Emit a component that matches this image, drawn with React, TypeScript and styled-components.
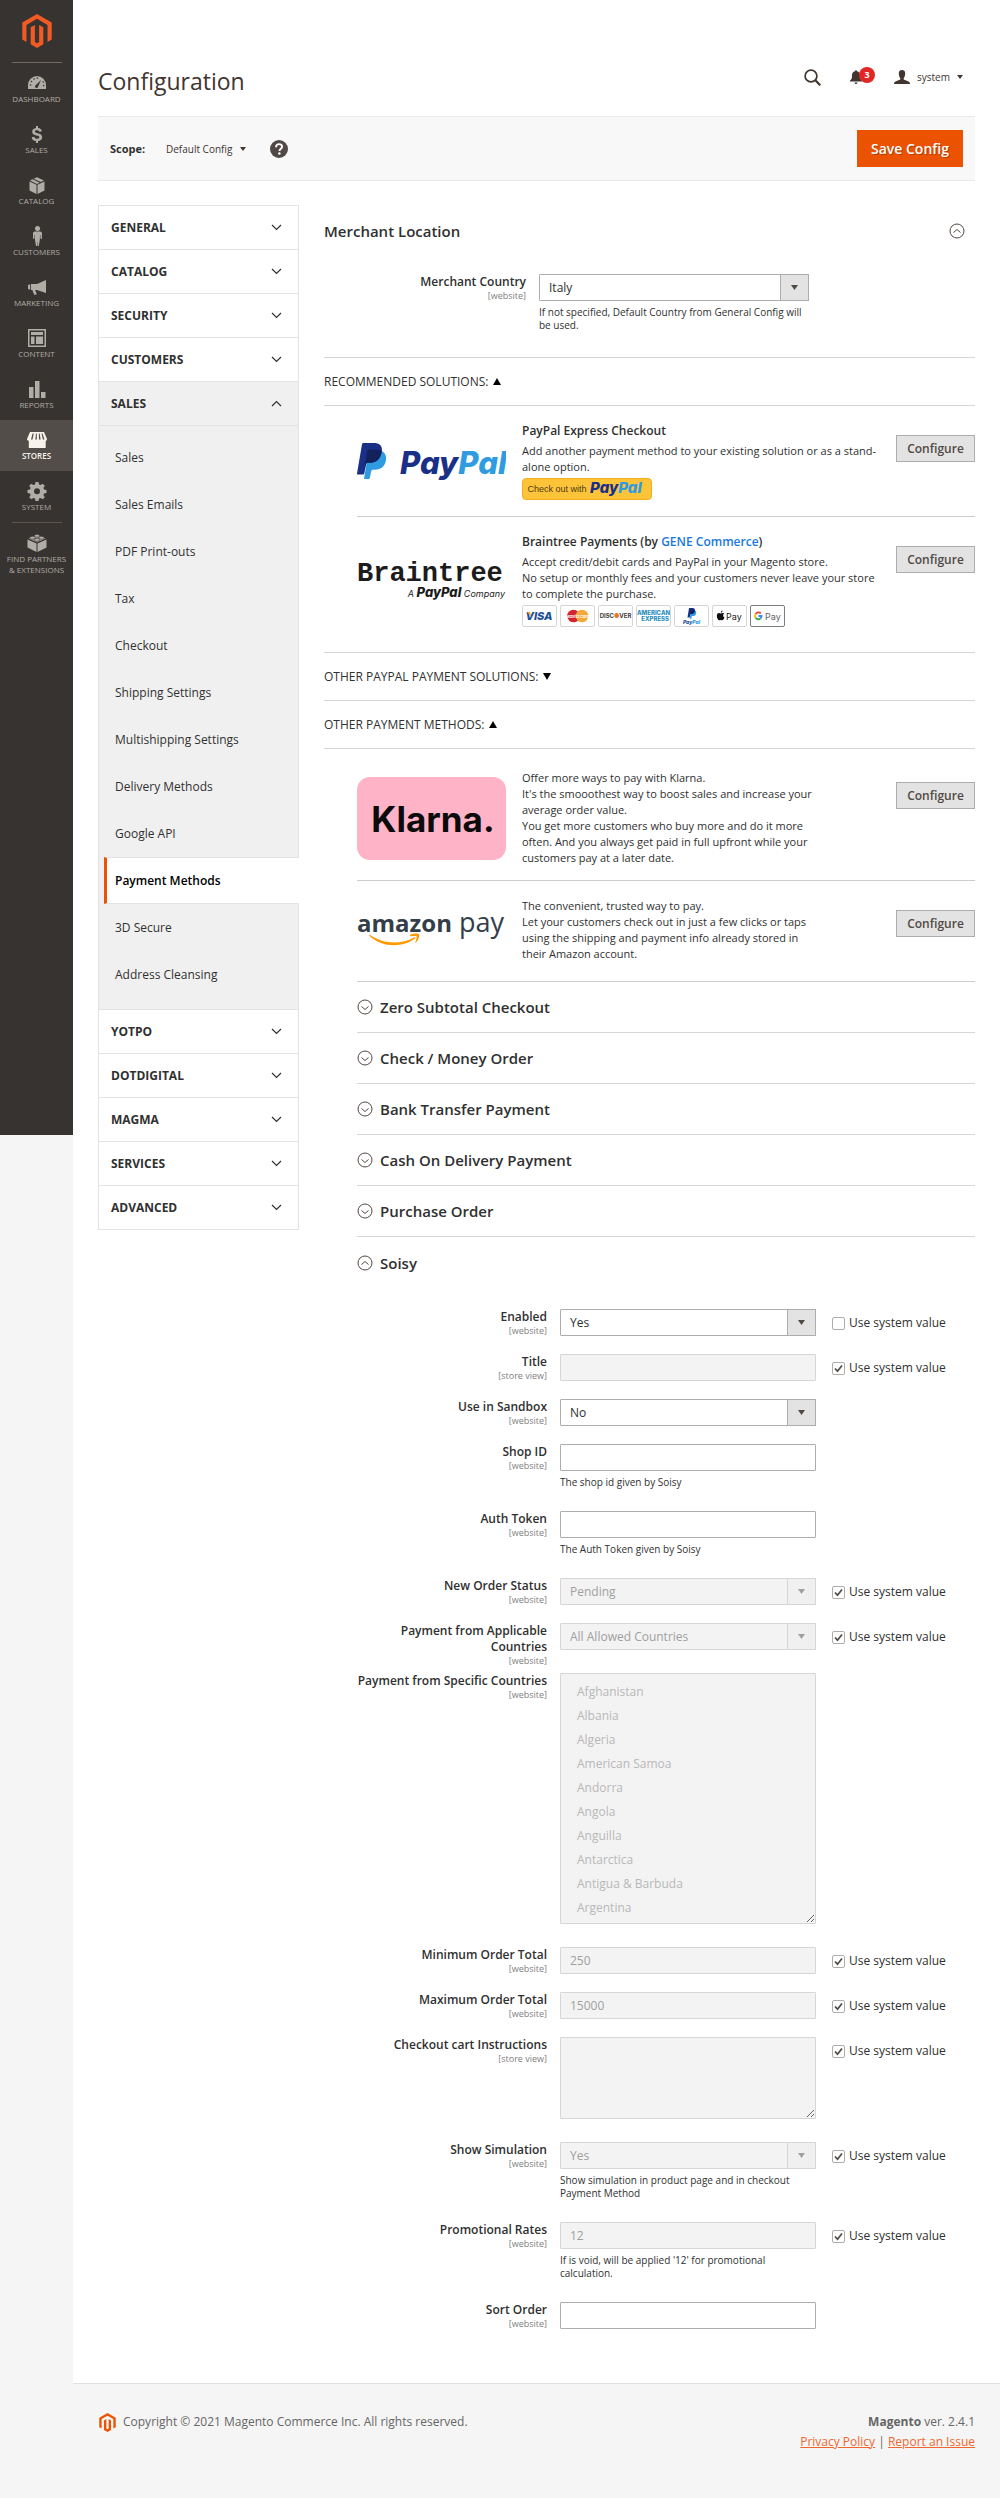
import React from 'react';
import styled, { createGlobalStyle, css } from 'styled-components';

const GlobalStyle = createGlobalStyle`
  *, *::before, *::after { box-sizing: border-box; }
  body { margin: 0; background: #f5f5f5; }
  body, button, input, select, textarea { font-family: "Open Sans", "Noto Sans", sans-serif; }
`;

const Shell = styled.div`
  display: grid;
  grid-template-columns: 73px minmax(0, 1fr);
  align-items: start;
  min-height: 100vh;
  color: #303030;
  font-size: 12px;
  line-height: 16px;
`;

/* ---------- Admin rail ---------- */

const Rail = styled.nav`
  display: flex;
  flex-direction: column;
  align-items: center;
  min-height: 1135px;
  background: #373330;
`;

const RailLogo = styled.a`
  display: flex;
  padding: 14px 0;
  width: 50px;
  justify-content: center;
  border-bottom: 1px solid #736963;
`;

const RailItem = styled.a<{ $active?: boolean }>`
  display: flex;
  flex-direction: column;
  align-items: center;
  gap: 0;
  width: 100%;
  height: 51px;
  padding-top: 10px;
  font-size: 8px;
  line-height: 11px;
  text-align: center;
  text-transform: uppercase;
  text-decoration: none;
  color: ${(p) => (p.$active ? '#f7f3eb' : '#b0aca6')};
  background: ${(p) => (p.$active ? '#524d49' : 'transparent')};
  font-weight: ${(p) => (p.$active ? 600 : 500)};
  svg { width: 20px; height: 20px; fill: currentColor; flex: none; }
`;

const RailRule = styled.hr`
  width: 50px;
  margin: 0;
  border: 0;
  border-top: 1px solid #5d5650;
`;

const railItems: { label: string; active?: boolean; icon: React.ReactNode }[] = [
  {
    label: 'Dashboard',
    icon: (
      <svg viewBox="0 0 20 20" aria-hidden="true">
        <path d="M10 3a9 9 0 0 0-9 9v4h18v-4a9 9 0 0 0-9-9z" />
        <path d="M14 7l-3.200 7.200a1.500 1.500 0 0 1-2.600-1.500z" fill="#373330" />
        <g fill="#373330">
          <circle cx="3.500" cy="12" r=".8" /><circle cx="4.500" cy="8.500" r=".8" /><circle cx="7" cy="6" r=".8" />
          <circle cx="10.300" cy="5" r=".8" /><circle cx="16.200" cy="9" r=".8" /><circle cx="16.700" cy="12.500" r=".8" />
        </g>
      </svg>
    ),
  },
  {
    label: 'Sales',
    icon: (
      <svg viewBox="0 0 20 20" aria-hidden="true">
        <path d="M9 2h2v2c2.200.2 3.600 1.300 4 3.300l-2.700.5c-.3-1-1-1.500-2.300-1.500-1.400 0-2.100.5-2.100 1.300 0 .9.900 1.200 2.700 1.600 2.800.6 4.600 1.500 4.600 4 0 2.100-1.600 3.500-4.200 3.800v2H9v-2c-2.600-.2-4-1.500-4.400-3.800l2.800-.5c.3 1.400 1.200 2 2.700 2s2.300-.5 2.300-1.400c0-1-.8-1.300-2.900-1.800C6.800 11 5.200 10.100 5.200 7.800 5.200 5.700 6.600 4.300 9 4z" />
      </svg>
    ),
  },
  {
    label: 'Catalog',
    icon: (
      <svg viewBox="0 0 20 20" aria-hidden="true">
        <path d="M2.500 6.500l7 3.200V19l-7-3.600zM17.500 6.500l-7 3.200V19l7-3.600zM3 5.500l2.500-1.200 7.200 3.400L10 8.900zM6.600 3.800L10 2.200l7 3.300-3.200 1.600z" />
      </svg>
    ),
  },
  {
    label: 'Customers',
    icon: (
      <svg viewBox="0 0 20 20" aria-hidden="true">
        <circle cx="10.500" cy="2.600" r="2.500" />
        <path d="M8 5.500h5c1.300 0 2 .8 2 2v5.300h-1.600V9h-.4l-.2 5-1 6h-1l-.3-5-.3 5H9l-1-6-.2-5h-.4v3.800H6V7.500c0-1.200.7-2 2-2z" />
      </svg>
    ),
  },
  {
    label: 'Marketing',
    icon: (
      <svg viewBox="0 0 20 20" aria-hidden="true">
        <path d="M19 3v13l-9-3H8.200l1.600 4.200-2.500.8-2-5H4V7h6zM3.200 7.300v5.400L1 12V8z" />
      </svg>
    ),
  },
  {
    label: 'Content',
    icon: (
      <svg viewBox="0 0 20 20" aria-hidden="true">
        <path fillRule="evenodd" d="M1 1h18v18H1zm1.500 1.500v15h15v-15z" />
        <path d="M4 4h12v3H4zM4 8.500h3.500V16H4zM9 8.500h7V16H9z" />
      </svg>
    ),
  },
  {
    label: 'Reports',
    icon: (
      <svg viewBox="0 0 20 20" aria-hidden="true">
        <path d="M2 8h4.500v11H2zM8 2h4.500v17H8zM14 13h4.500v6H14z" />
      </svg>
    ),
  },
  {
    label: 'Stores',
    active: true,
    icon: (
      <svg viewBox="0 0 20 20" aria-hidden="true">
        <path d="M3 2h14l3 7c0 1-.6 1.700-1.300 1.900V18H1.800v-7.100C.8 10.500 0 10 0 9z" />
        <path d="M5.600 3.500h1.200L5.500 9.500H4zM9 3.500h.8v6H8.300zM11.800 3.500h.9l.9 6H12zM14.500 3.500h1l2 6h-1.600z" fill="#524d49" />
      </svg>
    ),
  },
  {
    label: 'System',
    icon: (
      <svg viewBox="0 0 20 20" aria-hidden="true">
        <path fillRule="evenodd" d="M8.500 1h3l.5 2.400 1.600.7 2.100-1.400 2.100 2.100-1.400 2.100.7 1.600 2.400.5v3l-2.400.5-.7 1.600 1.400 2.100-2.100 2.100-2.100-1.400-1.600.7-.5 2.400h-3L8 17.600l-1.600-.7-2.100 1.400-2.100-2.100 1.400-2.100-.7-1.600L.5 12V9l2.400-.5.7-1.600-1.400-2.100 2.100-2.100 2.100 1.400L8 3.400zM10 7.300a3 3 0 1 0 0 6 3 3 0 0 0 0-6z" />
      </svg>
    ),
  },
];

const MagentoMark = ({ size, color }: { size: number; color: string }) => (
  <svg width={size} height={size} viewBox="0 0 24 24" fill={color} aria-hidden="true">
    <path d="M12 24l-4.455-2.572v-12l2.970-1.715v12.001l1.485.902 1.485-.902V7.713l2.971 1.715v12L12 24zM22.391 6v11.999l-2.969 1.714V7.713L12 3.430 4.574 7.713v12L1.609 18V6L12.005 0z" />
  </svg>
);

/* ---------- Page header ---------- */

const Page = styled.div`
  display: flex;
  flex-direction: column;
  min-height: 100vh;
  background: #fff;
`;

const Body = styled.div`
  flex: 1;
  padding: 0 25px 36px;
`;

const Header = styled.header`
  display: flex;
  justify-content: space-between;
  align-items: flex-start;
  padding: 65px 12px 19px 0;
`;

const Title = styled.h1`
  margin: 0;
  font-size: 23px;
  line-height: 32px;
  font-weight: 400;
  color: #41362f;
`;

const Tools = styled.div`
  display: flex;
  align-items: center;
  height: 24px;
  gap: 19px;
`;

const PlainButton = styled.button`
  display: flex;
  align-items: center;
  gap: 7px;
  padding: 0;
  border: 0;
  background: none;
  color: #41362f;
  font-size: 10px;
  line-height: 16px;
  cursor: pointer;
`;

const SearchButton = styled(PlainButton)`
  margin-right: 10px;
`;

const Badge = styled.span`
  display: grid;
  place-items: center;
  width: 16px;
  height: 16px;
  margin: 0 0 4px -10px;
  border-radius: 50%;
  background: #e22626;
  color: #fff;
  font-size: 9px;
  font-weight: 700;
`;

const ScopeBar = styled.div`
  display: flex;
  align-items: center;
  padding: 13px 12px;
  border: solid #e9e9e9;
  border-width: 1px 0;
  background: #f8f8f8;
`;

const ScopeLabel = styled.span`
  width: 56px;
  font-size: 11px;
  font-weight: 700;
`;

const ScopeButton = styled(PlainButton)`
  margin-right: 24px;
  gap: 8px;
`;

const SaveButton = styled.button`
  width: 106px;
  height: 37px;
  margin-left: auto;
  padding: 0;
  border: 1px solid #eb5202;
  background: #eb5202;
  color: #fff;
  font-size: 14px;
  font-weight: 600;
  text-shadow: 1px 1px 0 rgba(0, 0, 0, 0.25);
  cursor: pointer;
`;

const Triangle = ({ up, width = 7, height = 5 }: { up?: boolean; width?: number; height?: number }) => (
  <svg width={width} height={height} viewBox="0 0 8 6" preserveAspectRatio="none" fill="currentColor" aria-hidden="true">
    <path d={up ? 'M0 6L4 0l4 6z' : 'M0 0h8L4 6z'} />
  </svg>
);

/* ---------- Configuration navigation ---------- */

const Columns = styled.div`
  display: grid;
  grid-template-columns: 201px minmax(0, 1fr);
  gap: 25px;
  align-items: start;
  margin-top: 24px;
`;

const ConfigNav = styled.nav`
  border: solid #e3e3e3;
  border-width: 1px 1px 0;
`;

const NavHead = styled.button<{ $open?: boolean }>`
  display: flex;
  align-items: center;
  justify-content: space-between;
  width: 100%;
  height: 44px;
  padding: 0 16px 0 12px;
  border: 0;
  border-bottom: 1px solid #e3e3e3;
  background: ${(p) => (p.$open ? '#f0f0f0' : '#fff')};
  color: #303030;
  font-size: 12px;
  font-weight: 700;
  text-transform: uppercase;
  cursor: pointer;
`;

const NavList = styled.ul`
  margin: 0;
  padding: 8px 0 11px;
  list-style: none;
  background: #f0f0f0;
  border-bottom: 1px solid #e3e3e3;
`;

const NavLink = styled.a<{ $active?: boolean }>`
  display: flex;
  align-items: center;
  height: 47px;
  padding-left: 16px;
  color: #303030;
  font-size: 12px;
  text-decoration: none;
  ${(p) =>
    p.$active &&
    css`
      margin: 0 -1px 0 5px;
      padding-left: 8px;
      border: solid #e3e3e3;
      border-width: 1px 0;
      border-left: 3px solid #eb5202;
      background: #fff;
      color: #000;
      font-weight: 600;
    `}
`;

const Chevron = ({ up }: { up?: boolean }) => (
  <svg width="11" height="7" viewBox="0 0 11 7" fill="none" stroke="#303030" strokeWidth="1.200" aria-hidden="true">
    <path d={up ? 'M1 6l4.500-4.500L10 6' : 'M1 1l4.500 4.500L10 1'} />
  </svg>
);

const CircleChevron = ({ up }: { up?: boolean }) => (
  <svg width="16" height="16" viewBox="0 0 16 16" fill="none" stroke="#514943" aria-hidden="true">
    <circle cx="8" cy="8" r="7" />
    <path d={up ? 'M4.500 9.500L8 6.500l3.500 3' : 'M4.500 7.500l3.500 3 3.500-3'} />
  </svg>
);

const navBefore = ['General', 'Catalog', 'Security', 'Customers'];
const navAfter = ['Yotpo', 'Dotdigital', 'Magma', 'Services', 'Advanced'];
const salesLinks = [
  'Sales', 'Sales Emails', 'PDF Print-outs', 'Tax', 'Checkout', 'Shipping Settings', 'Multishipping Settings',
  'Delivery Methods', 'Google API', 'Payment Methods', '3D Secure', 'Address Cleansing',
];

/* ---------- Sections ---------- */

const SectionHead = styled.button`
  display: flex;
  align-items: center;
  justify-content: space-between;
  width: 100%;
  height: 51px;
  padding: 0 10px 0 0;
  border: 0;
  background: none;
  color: #303030;
  font-size: 15px;
  font-weight: 600;
  cursor: pointer;
`;

const MerchantFields = styled.div`
  padding: 18px 0 3px;
  border-bottom: 1px solid #d6d6d6;
`;

const GroupHead = styled.button`
  display: flex;
  align-items: center;
  gap: 5px;
  width: 100%;
  height: 48px;
  padding: 0;
  border: 0;
  border-bottom: 1px solid #d6d6d6;
  background: none;
  color: #303030;
  font-size: 12px;
  text-transform: uppercase;
  cursor: pointer;
  svg { color: #000; }
`;

const Provider = styled.article`
  display: grid;
  grid-template-columns: 149px minmax(0, 1fr) 79px;
  align-items: start;
  padding: 17px 0 16px;
  & + & { border-top: 1px solid #ccc; }
`;

const Recommended = styled.div`
  padding: 0 0 9px 33px;
  border-bottom: 1px solid #d6d6d6;
`;

const OtherMethods = styled.div`
  padding: 4px 0 5px 33px;
  ${Provider} { padding-bottom: 14px; }
`;

const ProviderLogo = styled.div`
  display: flex;
  align-self: center;
`;

const ProviderText = styled.div<{ $narrow?: boolean }>`
  padding-left: 16px;
  max-width: ${(p) => (p.$narrow ? '314px' : 'none')};
  font-size: 11px;
`;

const ProviderTitle = styled.h3`
  margin: 0 0 4px;
  font-size: 12px;
  font-weight: 600;
  a { color: #1979e0; text-decoration: none; }
`;

const ConfigureButton = styled.button`
  height: 27px;
  margin-top: 12px;
  padding: 0;
  border: 1px solid #adadad;
  background: #e3e3e3;
  color: #514943;
  font-size: 12px;
  font-weight: 600;
  cursor: pointer;
`;

const CheckoutBadge = styled.div`
  display: flex;
  align-items: center;
  justify-content: center;
  gap: 2px;
  width: 130px;
  height: 22px;
  margin-top: 3px;
  border: 1px solid #f0ae20;
  border-radius: 4px;
  background: #fdc439;
  color: #4d3a17;
  font: 500 9px/16px "Liberation Sans", sans-serif;
`;

const Cards = styled.div`
  display: flex;
  gap: 3px;
  margin-top: 3px;
`;

const Card = styled.span<{ $strong?: boolean }>`
  display: flex;
  width: 35px;
  height: 22px;
  border: 1px solid ${(p) => (p.$strong ? '#7c7c80' : '#d6d6d6')};
  border-radius: 2px;
  background: #fff;
`;

const MethodList = styled.div`
  margin-left: 33px;
  border-top: 1px solid #ccc;
`;

const MethodHead = styled.button`
  display: flex;
  align-items: center;
  gap: 7px;
  width: 100%;
  height: 51px;
  padding: 0;
  border: 0;
  border-bottom: 1px solid #d6d6d6;
  background: none;
  color: #303030;
  font-size: 15px;
  font-weight: 600;
  cursor: pointer;
  &:last-child { border-bottom: 0; }
`;

/* ---------- Form fields ---------- */

const SoisyFields = styled.div`
  padding-top: 21px;
`;

const Row = styled.div<{ $wide?: boolean }>`
  display: grid;
  grid-template-columns: ${(p) =>
    p.$wide
      ? 'minmax(0, 202fr) minmax(0, 270fr) minmax(0, 153fr)'
      : 'minmax(0, 223fr) minmax(0, 256fr) minmax(0, 146fr)'};
  column-gap: 13px;
  align-items: start;
`;

const FieldLabel = styled.label`
  justify-self: end;
  max-width: 192px;
  padding-bottom: 6px;
  text-align: right;
  font-weight: 600;
  small {
    display: block;
    color: #808080;
    font-size: 9px;
    line-height: 12px;
    font-weight: 400;
  }
`;

const Control = styled.div`
  display: grid;
  padding-bottom: 18px;
`;

const fieldLook = css`
  width: 100%;
  height: 27px;
  margin: 0;
  padding: 0 9px;
  border: 1px solid #adadad;
  border-radius: 1px;
  background: #fff;
  color: #303030;
  font-size: 12px;
  &:disabled {
    border-color: #d6d6d6;
    background: #f3f3f3;
    color: #a0a0a0;
    opacity: 1;
  }
`;

const TextInput = styled.input`${fieldLook}`;

const TextArea = styled.textarea`
  ${fieldLook}
  height: 82px;
  margin-bottom: 5px;
  resize: vertical;
`;

const SelectFrame = styled.div`
  display: grid;
  grid-template-columns: minmax(0, 1fr) 29px;
`;

const SelectInput = styled.select`
  ${fieldLook}
  grid-area: 1 / 1 / 2 / 3;
  appearance: none;
`;

const SelectArrow = styled.span<{ $disabled?: boolean }>`
  grid-area: 1 / 2;
  display: grid;
  place-items: center;
  border: 1px solid ${(p) => (p.$disabled ? '#d6d6d6' : '#adadad')};
  background: ${(p) => (p.$disabled ? '#f0f0f0' : '#e3e3e3')};
  color: ${(p) => (p.$disabled ? '#a0a0a0' : '#514943')};
  pointer-events: none;
  z-index: 1;
`;

const ListBox = styled.select`
  ${fieldLook}
  height: 251px;
  margin-bottom: 5px;
  padding: 5px 8px;
  overflow: hidden;
  resize: vertical;
  option {
    min-height: 24px;
    padding: 4px 8px 3px;
    line-height: 16px;
    color: #b8b8b8;
  }
`;

const Note = styled.p`
  margin: 5px 0 4px;
  font-size: 10px;
  line-height: 13px;
`;

const Inherit = styled.label`
  display: flex;
  align-items: center;
  gap: 4px;
  height: 28px;
  margin-left: 3px;
  white-space: nowrap;
`;

const tick =
  "url(\"data:image/svg+xml,%3Csvg xmlns='http://www.w3.org/2000/svg' viewBox='0 0 11 11'%3E%3Cpath d='M2 5.500l2.500 2.700L9 2.500' fill='none' stroke='%23514943' stroke-width='1.700'/%3E%3C/svg%3E\")";

const CheckInput = styled.input`
  appearance: none;
  width: 13px;
  height: 13px;
  margin: 0;
  border: 1px solid #adadad;
  border-radius: 2px;
  background: #fff;
  &:checked { background-image: ${tick}; }
`;

type FieldSpec = {
  id: string;
  label: string;
  scope: string;
  kind: 'text' | 'select' | 'list' | 'area';
  value?: string;
  note?: string;
  disabled?: boolean;
  inherit?: boolean;
  wide?: boolean;
};

const countries = [
  'Afghanistan', 'Albania', 'Algeria', 'American Samoa', 'Andorra',
  'Angola', 'Anguilla', 'Antarctica', 'Antigua & Barbuda', 'Argentina',
];

const soisyFields: FieldSpec[] = [
  { id: 'enabled', label: 'Enabled', scope: 'website', kind: 'select', value: 'Yes', inherit: false },
  { id: 'title', label: 'Title', scope: 'store view', kind: 'text', disabled: true, inherit: true },
  { id: 'sandbox', label: 'Use in Sandbox', scope: 'website', kind: 'select', value: 'No' },
  { id: 'shop', label: 'Shop ID', scope: 'website', kind: 'text', note: 'The shop id given by Soisy' },
  { id: 'token', label: 'Auth Token', scope: 'website', kind: 'text', note: 'The Auth Token given by Soisy' },
  { id: 'status', label: 'New Order Status', scope: 'website', kind: 'select', value: 'Pending', disabled: true, inherit: true },
  { id: 'applicable', label: 'Payment from Applicable Countries', scope: 'website', kind: 'select', value: 'All Allowed Countries', disabled: true, inherit: true },
  { id: 'specific', label: 'Payment from Specific Countries', scope: 'website', kind: 'list', disabled: true },
  { id: 'min', label: 'Minimum Order Total', scope: 'website', kind: 'text', value: '250', disabled: true, inherit: true },
  { id: 'max', label: 'Maximum Order Total', scope: 'website', kind: 'text', value: '15000', disabled: true, inherit: true },
  { id: 'instructions', label: 'Checkout cart Instructions', scope: 'store view', kind: 'area', disabled: true, inherit: true },
  { id: 'simulation', label: 'Show Simulation', scope: 'website', kind: 'select', value: 'Yes', disabled: true, inherit: true, note: 'Show simulation in product page and in checkout Payment Method' },
  { id: 'rates', label: 'Promotional Rates', scope: 'website', kind: 'text', value: '12', disabled: true, inherit: true, note: "If is void, will be applied '12' for promotional calculation." },
  { id: 'sort', label: 'Sort Order', scope: 'website', kind: 'text' },
];

const Field = ({ id, label, scope, kind, value, note, disabled, inherit, wide }: FieldSpec) => (
  <Row $wide={wide}>
    <FieldLabel htmlFor={id}>
      {label}
      <small>[{scope}]</small>
    </FieldLabel>
    <Control>
      {kind === 'text' && <TextInput id={id} type="text" defaultValue={value} disabled={disabled} />}
      {kind === 'area' && <TextArea id={id} disabled={disabled} />}
      {kind === 'list' && (
        <ListBox id={id} multiple size={10} disabled={disabled}>
          {countries.map((c) => <option key={c}>{c}</option>)}
        </ListBox>
      )}
      {kind === 'select' && (
        <SelectFrame>
          <SelectInput id={id} disabled={disabled}><option>{value}</option></SelectInput>
          <SelectArrow $disabled={disabled}><Triangle /></SelectArrow>
        </SelectFrame>
      )}
      {note && <Note>{note}</Note>}
    </Control>
    {inherit !== undefined && (
      <Inherit>
        <CheckInput type="checkbox" defaultChecked={inherit} />
        Use system value
      </Inherit>
    )}
  </Row>
);

/* ---------- Brand artwork ---------- */

const brandFont = 'Inter, sans-serif';

const PayPalGlyph = () => (
  <>
    <path d="M24.800 8C29 10.500 29.700 14 28.800 18c-1.400 6.300-5.500 8.700-11.300 8.700h-1.700c-.8 0-1.300.5-1.500 1.300L12.800 35c-.1.600-.5 1-1.200 1H7l2.600-16z" fill="#2f9be0" />
    <path d="M5 1.200C5.200.4 5.700 0 6.500 0h10.300c6.600 0 9.200 3.700 7.800 10-1.400 6.700-5.700 9.800-12.300 9.800h-1.600c-.9 0-1.300.5-1.500 1.300L7.300 30.500c-.2.700-.6 1-1.300 1H.700c-.5 0-.8-.4-.7-1z" fill="#1a2f86" />
    <path d="M24.700 8c-1-.6-3-1.200-5.500-1.200h-7.500c-.8 0-1.300.4-1.400 1.100l-2.700 16 1.600-2.800c.2-.8.600-1.300 1.500-1.300h1.600c6.900 0 11.200-3.600 12.400-11.800z" fill="#12205c" />
  </>
);

const PayPalLogo = () => (
  <svg width="149" height="38" viewBox="0 0 149 38" role="img" aria-label="PayPal">
    <PayPalGlyph />
    <text x="43" y="31" fontFamily={brandFont} fontSize="31" fontWeight="800" fontStyle="italic">
      <tspan fill="#1a2f86">Pay</tspan><tspan fill="#2f9be0">Pal</tspan>
    </text>
  </svg>
);

const BraintreeLogo = () => (
  <svg width="149" height="44" viewBox="0 0 149 44">
    <text x="0" y="22" fontFamily="'Liberation Mono', monospace" fontSize="27" fontWeight="700" fill="#1c1c1c">Braintree</text>
    <text x="148" y="38" textAnchor="end" fontFamily={brandFont} fontSize="9" fontStyle="italic" fill="#1c1c1c">
      A <tspan fontSize="13" fontWeight="800">PayPal</tspan> Company
    </text>
  </svg>
);

const KlarnaLogo = () => (
  <svg width="149" height="83" viewBox="0 0 149 83">
    <rect width="149" height="83" rx="13" fill="#ffb3c7" />
    <text x="76" y="55" textAnchor="middle" fontFamily={brandFont} fontSize="35" fontWeight="700" fill="#0b0b0b">Klarna.</text>
  </svg>
);

const AmazonLogo = () => (
  <svg width="149" height="38" viewBox="0 0 149 38">
    <text x="0" y="21" fontFamily="'Open Sans', sans-serif" fontSize="24" fontWeight="700" fill="#333e48">amazon</text>
    <text x="102" y="21" fontFamily="'Open Sans', sans-serif" fontSize="27" fontWeight="400" fill="#333e48">pay</text>
    <path d="M13 24c14 9.500 31 9.500 44 2.500 1-.5 1.800.5.800 1.300C45 37 25 36.500 12.500 25c-.7-.7-.2-1.500.5-1z" fill="#ff9900" />
    <path d="M53 24c2.500-1.800 8-2 9-.8s-.5 6-3 8.200c-.5.400-.9.100-.6-.5.800-2 1.800-4.600 1.200-5.400-.6-.7-3.900-.5-6.200-.3-.6 0-.9-.8-.4-1.200z" fill="#ff9900" />
  </svg>
);

const CardArt = ({ children }: { children: React.ReactNode }) => (
  <svg width="33" height="20" viewBox="0 0 33 20">{children}</svg>
);

const PaymentCards = () => (
  <Cards>
    <Card><CardArt><text x="16" y="14" textAnchor="middle" fontFamily={brandFont} fontSize="11" fontWeight="800" fontStyle="italic" fill="#1a4e97">VISA</text><path d="M4 6h3l1.500 5z" fill="#f0a838" /></CardArt></Card>
    <Card><CardArt><circle cx="12.500" cy="10" r="6.300" fill="#d2232f" /><circle cx="21" cy="10" r="6.300" fill="#f2a93b" /><text x="16.500" y="12" textAnchor="middle" fontFamily={brandFont} fontSize="4" fontWeight="700" fontStyle="italic" fill="#fff">MasterCard</text></CardArt></Card>
    <Card><CardArt><text x="16.500" y="12" textAnchor="middle" fontFamily={brandFont} fontSize="6" fontWeight="700" fill="#3c3c3c">DISC<tspan fill="#ee7623">●</tspan>VER</text></CardArt></Card>
    <Card><CardArt><text x="0" y="9" fontFamily={brandFont} fontSize="6" fontWeight="800" fill="#2a8fbd">AMERICAN</text><text x="32" y="15" textAnchor="end" fontFamily={brandFont} fontSize="6" fontWeight="800" fill="#2a8fbd">EXPRESS</text></CardArt></Card>
    <Card><CardArt><g transform="translate(12.500 2) scale(.3)"><PayPalGlyph /></g><text x="16.500" y="18" textAnchor="middle" fontFamily={brandFont} fontSize="5" fontWeight="800" fontStyle="italic" fill="#1a4e97">Pay<tspan fill="#2f9be0">Pal</tspan></text></CardArt></Card>
    <Card><CardArt><path d="M9.500 4.500c.2 1-.7 2.100-1.700 2.100-.1-1 .7-1.900 1.700-2.100zM5.700 7c.8-.1 1.400.4 2 .4.700 0 2-.9 3.400.1-1.500 1.200-1.100 3.300.4 4-.6 1.700-1.600 2.800-2.500 2.700-.6 0-.8-.3-1.500-.3s-.9.300-1.500.3C4.500 14.200 2.200 8 5.700 7z" fill="#111" /><text x="13" y="14" fontFamily={brandFont} fontSize="9" fill="#222">Pay</text></CardArt></Card>
    <Card $strong><CardArt><g fill="none" strokeWidth="1.900"><path d="M9.800 7.400A3.300 3.300 0 0 0 4.600 8" stroke="#ea4335" /><path d="M4.600 8a3.300 3.300 0 0 0 0 3.800" stroke="#fbbc04" /><path d="M4.600 11.800a3.300 3.300 0 0 0 4.800.7" stroke="#34a853" /><path d="M9.400 12.500a3.300 3.300 0 0 0 1.100-2.500H7.500" stroke="#4285f4" /></g><text x="14" y="14" fontFamily={brandFont} fontSize="9" fill="#5f6368">Pay</text></CardArt></Card>
  </Cards>
);

/* ---------- Footer ---------- */

const Footer = styled.footer`
  display: flex;
  justify-content: space-between;
  padding: 28px 25px 47px;
  border-top: 1px solid #e0e0e0;
  background: #f5f5f5;
  color: #666;
  line-height: 20px;
`;

const Copyright = styled.div`
  display: flex;
  align-items: center;
  gap: 6px;
  height: 20px;
`;

const FooterSide = styled.div`
  text-align: right;
  a { color: #ef672f; }
`;

export default function App() {
  return (
    <>
      <GlobalStyle />
      <Shell>
        <Rail>
          <RailLogo href="#" aria-label="Magento"><MagentoMark size={34} color="#f15a22" /></RailLogo>
          {railItems.map((item) => (
            <RailItem key={item.label} href="#" $active={item.active}>
              {item.icon}
              {item.label}
            </RailItem>
          ))}
          <RailRule />
          <RailItem href="#">
            <svg viewBox="0 0 20 20" aria-hidden="true">
              <path d="M.5 6.500l9 4V19l-9-4.500zM19.500 6.500l-9 4V19l9-4.500zM1.500 5.500L10 2l8.500 3.500L10 9.300z" />
              <ellipse cx="10" cy="2.800" rx="2.700" ry="1.500" stroke="#373330" strokeWidth=".6" />
              <ellipse cx="5.500" cy="4.800" rx="2.700" ry="1.500" stroke="#373330" strokeWidth=".6" />
              <ellipse cx="14.500" cy="4.800" rx="2.700" ry="1.500" stroke="#373330" strokeWidth=".6" />
              <ellipse cx="10" cy="6.800" rx="2.700" ry="1.500" stroke="#373330" strokeWidth=".6" />
            </svg>
            <span>Find Partners<br />&amp; Extensions</span>
          </RailItem>
        </Rail>

        <Page>
          <Body>
            <Header>
              <Title>Configuration</Title>
              <Tools>
                <SearchButton aria-label="Search">
                  <svg width="17" height="17" viewBox="0 0 17 17" fill="none" stroke="#41362f" aria-hidden="true">
                    <circle cx="7" cy="7" r="5.900" strokeWidth="1.700" />
                    <path d="M11.300 11.300l5 5" strokeWidth="2.200" />
                  </svg>
                </SearchButton>
                <PlainButton aria-label="Notifications">
                  <svg width="12" height="14" viewBox="0 0 12 14" fill="#41362f" aria-hidden="true">
                    <path d="M5 1.200a1 1 0 0 1 2 0c2.200.5 3 2.200 3 4.300 0 3 .5 4.200 2 5v1H0v-1c1.500-.8 2-2 2-5 0-2.100.8-3.800 3-4.300zM4.500 12.500h3c0 .8-.7 1.500-1.500 1.500s-1.500-.7-1.500-1.500z" />
                  </svg>
                  <Badge>3</Badge>
                </PlainButton>
                <PlainButton>
                  <svg width="16" height="14" viewBox="0 0 16 14" fill="#41362f" aria-hidden="true">
                    <path d="M8 0c2.200 0 3.300 1.400 3.200 3.600C11.100 6 10.300 7.500 9.700 8.200v1.300l4.300 1.700c1.300.5 2 1.300 2 2.800H0c0-1.500.7-2.300 2-2.800l4.300-1.700V8.200C5.700 7.500 4.900 6 4.800 3.600 4.700 1.400 5.800 0 8 0z" />
                  </svg>
                  system
                  <Triangle width={6} height={4} />
                </PlainButton>
              </Tools>
            </Header>

            <ScopeBar>
              <ScopeLabel>Scope:</ScopeLabel>
              <ScopeButton>Default Config <Triangle width={6} height={4} /></ScopeButton>
              <PlainButton aria-label="What is this?">
                <svg width="18" height="18" viewBox="0 0 18 18" aria-hidden="true">
                  <circle cx="9" cy="9" r="9" fill="#514943" />
                  <path d="M6 7.200c0-2 1.300-3.100 3.100-3.100s3 1.100 3 2.600c0 2-2.600 2.100-2.600 4.200" fill="none" stroke="#fff" strokeWidth="1.900" />
                  <circle cx="9.400" cy="13.500" r="1.200" fill="#fff" />
                </svg>
              </PlainButton>
              <SaveButton>Save Config</SaveButton>
            </ScopeBar>

            <Columns>
              <ConfigNav>
                {navBefore.map((n) => <NavHead key={n}>{n}<Chevron /></NavHead>)}
                <NavHead $open>Sales<Chevron up /></NavHead>
                <NavList>
                  {salesLinks.map((n) => (
                    <li key={n}><NavLink href="#" $active={n === 'Payment Methods'}>{n}</NavLink></li>
                  ))}
                </NavList>
                {navAfter.map((n) => <NavHead key={n}>{n}<Chevron /></NavHead>)}
              </ConfigNav>

              <main>
                <SectionHead>Merchant Location<CircleChevron up /></SectionHead>
                <MerchantFields>
                  <Field
                    id="country" label="Merchant Country" scope="website" kind="select" value="Italy" wide
                    note="If not specified, Default Country from General Config will be used."
                  />
                </MerchantFields>

                <GroupHead>Recommended Solutions:<Triangle up width={8} height={7} /></GroupHead>
                <Recommended>
                  <Provider>
                    <ProviderLogo><PayPalLogo /></ProviderLogo>
                    <ProviderText>
                      <ProviderTitle>PayPal Express Checkout</ProviderTitle>
                      Add another payment method to your existing solution or as a stand-<br />alone option.
                      <CheckoutBadge>
                        Check out with
                        <svg width="58" height="20" viewBox="0 0 58 20">
                          <text x="1" y="14" fontFamily={brandFont} fontSize="15" fontWeight="800" fontStyle="italic">
                            <tspan fill="#1a2f86">Pay</tspan><tspan fill="#2f9be0">Pal</tspan>
                          </text>
                        </svg>
                      </CheckoutBadge>
                    </ProviderText>
                    <ConfigureButton>Configure</ConfigureButton>
                  </Provider>
                  <Provider>
                    <ProviderLogo><BraintreeLogo /></ProviderLogo>
                    <ProviderText>
                      <ProviderTitle>Braintree Payments (by <a href="#">GENE Commerce</a>)</ProviderTitle>
                      Accept credit/debit cards and PayPal in your Magento store.<br />
                      No setup or monthly fees and your customers never leave your store<br />to complete the purchase.
                      <PaymentCards />
                    </ProviderText>
                    <ConfigureButton>Configure</ConfigureButton>
                  </Provider>
                </Recommended>

                <GroupHead>Other PayPal Payment Solutions:<Triangle width={8} height={7} /></GroupHead>
                <GroupHead>Other Payment Methods:<Triangle up width={8} height={7} /></GroupHead>
                <OtherMethods>
                  <Provider>
                    <ProviderLogo><KlarnaLogo /></ProviderLogo>
                    <ProviderText $narrow>
                      Offer more ways to pay with Klarna.<br />
                      It's the smooothest way to boost sales and increase your average order value.<br />
                      You get more customers who buy more and do it more often. And you always get paid in full upfront while your customers pay at a later date.
                    </ProviderText>
                    <ConfigureButton>Configure</ConfigureButton>
                  </Provider>
                  <Provider>
                    <ProviderLogo><AmazonLogo /></ProviderLogo>
                    <ProviderText $narrow>
                      The convenient, trusted way to pay.<br />
                      Let your customers check out in just a few clicks or taps using the shipping and payment info already stored in<br />
                      their Amazon account.
                    </ProviderText>
                    <ConfigureButton>Configure</ConfigureButton>
                  </Provider>
                </OtherMethods>

                <MethodList>
                  {['Zero Subtotal Checkout', 'Check / Money Order', 'Bank Transfer Payment', 'Cash On Delivery Payment', 'Purchase Order'].map((m) => (
                    <MethodHead key={m}><CircleChevron />{m}</MethodHead>
                  ))}
                  <MethodHead><CircleChevron up />Soisy</MethodHead>
                </MethodList>

                <SoisyFields>
                  {soisyFields.map((f) => <Field key={f.id} {...f} />)}
                </SoisyFields>
              </main>
            </Columns>
          </Body>

          <Footer>
            <Copyright>
              <MagentoMark size={19} color="#eb5202" />
              Copyright © 2021 Magento Commerce Inc. All rights reserved.
            </Copyright>
            <FooterSide>
              <div><strong>Magento</strong> ver. 2.4.1</div>
              <div><a href="#">Privacy Policy</a> | <a href="#">Report an Issue</a></div>
            </FooterSide>
          </Footer>
        </Page>
      </Shell>
    </>
  );
}
